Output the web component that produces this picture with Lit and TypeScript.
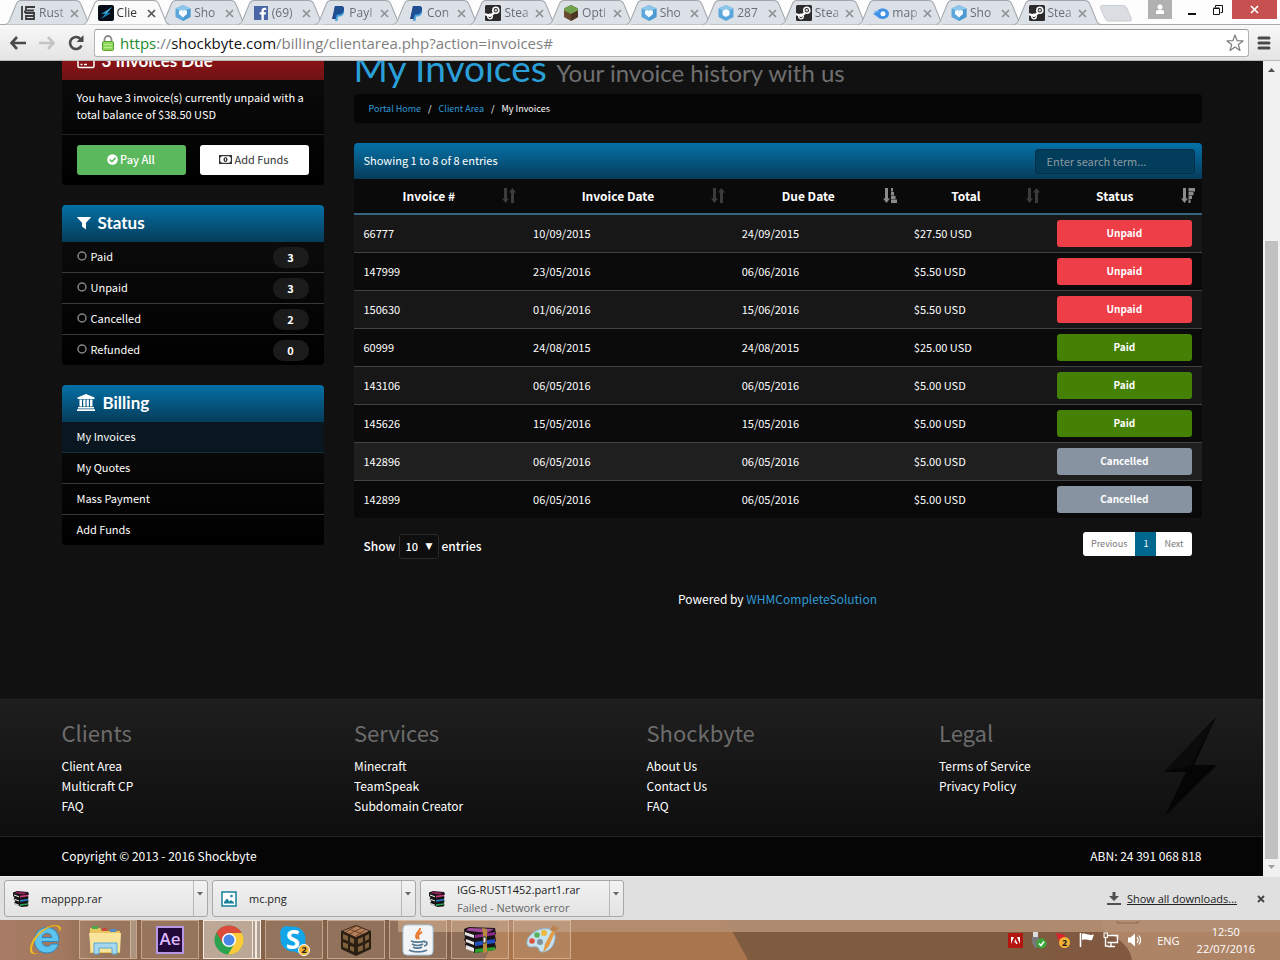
import { LitElement, html, css, svg, TemplateResult } from "lit";
import { customElement } from "lit/decorators.js";
import { classMap } from "lit/directives/class-map.js";

type Art = TemplateResult;

const art: Record<string, Art> = {
  rust: svg`<g fill="none" stroke="#3c3c3c" stroke-width="1.8"><path d="M2 1v14M15 2H6v3.500h8M6 2v0M5 8h9v6H6v-3h8M5 5.500V8M15 8h-9"/></g>`,
  shock: svg`<rect width="16" height="16" rx="2" fill="#060d16"/><path d="M14 2 3 9h4l-4 5 10-6H9z" fill="#1b84b8"/><path d="M14 2 6 8h3z" fill="#4ab4e0"/>`,
  cube: svg`<path d="M8 0l7.500 3.500v8.500L8 16 .5 12V3.500z" fill="#5aa7dc"/><path d="M8 0l7.500 3.500L8 7 .5 3.500z" fill="#8cc6ea"/><path d="M8 7v9l7.500-4V3.500z" fill="#3f8fc8" opacity=".6"/><path d="M4 6l2.500-1 1.500 1 1.500-1L12 6v3l-4 3.500L4 9z" fill="#f4faff"/>`,
  hex: svg`<path d="M8 0l7.500 3.500v8.500L8 16 .5 12V3.500z" fill="#5aa7dc"/><path d="M8 0l7.500 3.500L8 7 .5 3.500z" fill="#8cc6ea"/><path d="M8 4l3.500 2v4L8 12 4.500 10V6z" fill="#f4faff"/>`,
  fb: svg`<rect x="1" y="1" width="14" height="14" fill="#4b66a5"/><path d="M8.500 15V9.500H6.700V7.300h1.800V5.700c0-2 1.200-3 3-3h1.700v2.200H12c-.9 0-1.200.4-1.200 1.200v1.200H13l-.3 2.200h-1.900V15z" fill="#fff"/>`,
  paypal: svg`<path d="M5 1h5.500c3 0 4 1.800 3.300 4.500-.7 2.700-2.600 4-5.300 4H6.700L5.800 14H2z" fill="#253b80"/><path d="M6.500 4.500h5c2.500 0 3 1.500 2.500 3.500-.6 2.300-2.200 3.500-4.500 3.500H8.200L7.500 16H5z" fill="#1f8fd4" opacity=".75"/><path d="M5 1h5.500c3 0 4 1.800 3.300 4.500-.7 2.700-2.600 4-5.300 4H6.700L6 12.500H3z" fill="#1f4f93"/>`,
  steam: svg`<rect width="16" height="16" rx="1.500" fill="#2b2b2d"/><circle cx="10.800" cy="5.200" r="3" fill="none" stroke="#fff" stroke-width="1.600"/><circle cx="10.800" cy="5.200" r="1.200" fill="#ddd"/><path d="M0 9l5 2 4-3" fill="none" stroke="#fff" stroke-width="2.200"/><circle cx="5" cy="11.500" r="2.300" fill="none" stroke="#fff" stroke-width="1.300"/>`,
  grass: svg`<path d="M8 0l7 3.500v8.500L8 16 1 12V3.500z" fill="#6b4a31"/><path d="M8 0l7 3.500v2L8 9 1 5.500v-2z" fill="#6fa24a"/><path d="M8 9v7l7-4V5.500z" fill="#4d3524"/>`,
  media: svg`<path d="M0 9c3-1 4-5 9-5.500 4-.2 7 2 7 5s-2.500 5.500-6.500 5.500C5 14 5 11 0 9z" fill="#3f92e6"/><circle cx="10" cy="8.700" r="2.500" fill="#fff"/><path d="M1 6.500h5" stroke="#7db7f0" stroke-width="1.200"/>`,
  rar: svg`<path d="M0 1.500L4 0l11 1 1 2-1 1.500.500 2-.5 1.500.5 2-.5 2 .5 2-1 1.500-6 .5-7-3V11l1-1-2-2 1-1.500-2-2z" fill="#151515"/><path d="M4 .8l10 .9-3 1.800L1.500 2.200z" fill="#8f2058"/><path d="M7 4.700l8-1v1.500l-8 1.300z" fill="#d23a7a"/><path d="M7 9l8-1v1.500L7 10.800z" fill="#2d7fd0"/><path d="M7 13.300l8-1v1.500l-8 1.300z" fill="#2aa05a"/><path d="M1 3.500l5 1.700v1L1 4.500zM1.500 7.700l4.500 1.700v1L1.500 8.700zM1.500 12l4.500 1.700v1L1.500 13z" fill="#f2f2f2"/>`,
  image: svg`<rect x="1" y="1" width="14" height="14" fill="#fff" stroke="#15809c" stroke-width="1.500"/><path d="M3 12.500V11l3-3.500 2.500 3L10 9l3 2.500v1z" fill="#15809c"/><circle cx="10.500" cy="5" r="1.300" fill="#15809c"/>`,
  sort: svg`<path d="M5 0v10.500H7L3.500 15 0 10.500h2V0zM12 15V4.500h2L10.500 0 7 4.500h2V15z" fill="#3c3c3c"/>`,
  sortAsc: svg`<path d="M5 0v10.500H7L3.500 15 0 10.500h2V0z" fill="#8b8b8b"/><path d="M8 0h2v3.400H8zM8 4h3v3.200H8zM8 7.800h4.500V11H8zM8 11.600h6V15H8z" fill="#8b8b8b"/>`,
  sortDesc: svg`<path d="M5 0v10.500H7L3.500 15 0 10.500h2V0z" fill="#8b8b8b"/><path d="M7.500 0H14v3.400H7.500zM7.500 4h5v3.200h-5zM7.500 7.800H11V11H7.500zM7.500 11.600h2V15h-2z" fill="#8b8b8b"/>`,
};

const icon = (name: string, size = 16) =>
  html`<svg width=${size} height=${size} viewBox="0 0 16 16" aria-hidden="true">${art[name]}</svg>`;

const tabs: [string, string][] = [
  ["rust", "Rust"], ["shock", "Clie"], ["cube", "Sho"], ["fb", "(69)"], ["paypal", "PayI"],
  ["paypal", "Con"], ["steam", "Stea"], ["grass", "Opti"], ["cube", "Sho"], ["hex", "287"],
  ["steam", "Stea"], ["media", "map"], ["cube", "Sho"], ["steam", "Stea"],
];

const invoices: [string, string, string, string, string][] = [
  ["66777", "10/09/2015", "24/09/2015", "$27.50 USD", "Unpaid"],
  ["147999", "23/05/2016", "06/06/2016", "$5.50 USD", "Unpaid"],
  ["150630", "01/06/2016", "15/06/2016", "$5.50 USD", "Unpaid"],
  ["60999", "24/08/2015", "24/08/2015", "$25.00 USD", "Paid"],
  ["143106", "06/05/2016", "06/05/2016", "$5.00 USD", "Paid"],
  ["145626", "15/05/2016", "15/05/2016", "$5.00 USD", "Paid"],
  ["142896", "06/05/2016", "06/05/2016", "$5.00 USD", "Cancelled"],
  ["142899", "06/05/2016", "06/05/2016", "$5.00 USD", "Cancelled"],
];

@customElement("browser-chrome")
export class BrowserChrome extends LitElement {
  static styles = css`
    :host { display: block; font-family: "Open Sans", "Noto Sans", sans-serif; }
    button { border: 0; padding: 0; background: none; display: grid; place-items: center; font: inherit; }
    svg { display: block; flex: none; }
    .strip { display: flex; height: 24px; padding-left: 5px; background: #fdfdfd; }
    .tabs { display: flex; flex: 0 1 1086px; min-width: 0; }
    .tab { flex: 1 1 0; min-width: 0; position: relative; display: flex; align-items: center; height: 24px; padding: 2px 0 0 15px; box-sizing: border-box; font-size: 12px; line-height: 16px; color: #6a6e74; text-decoration: none; }
    .shape { position: absolute; top: 0; left: 0; width: calc(100% + 10px); height: 25px; }
    .shape path { fill: #dce0e7; stroke: #a3a7ac; }
    .active { z-index: 2; color: #333; }
    .active .shape path { fill: #fafafa; }
    .tab .fav { position: relative; display: flex; }
    .tab .name { position: relative; flex: 1; white-space: nowrap; margin-left: 3px; -webkit-mask-image: linear-gradient(90deg, #000 65%, transparent 105%); mask-image: linear-gradient(90deg, #000 65%, transparent 105%); }
    .tab .x { position: relative; flex: none; width: 9px; margin: 0 4px 0 2px; }
    .newtab { margin: 5px 0 0 8px; width: 34px; height: 17px; }
    .window { display: flex; margin-left: auto; height: 19px; padding-right: 3px; }
    .user { width: 24px; background: #b1b1b1; margin-right: 7px; }
    .win { width: 26px; }
    .close { width: 45px; background: #c75050; margin-left: 1px; }
    .toolbar { height: 35px; border-top: 1px solid #a9a9a9; border-bottom: 1px solid #b9b9b9; display: flex; align-items: center; background: linear-gradient(#f8f8f8, #e4e4e4); padding: 0 9px 0 8px; }
    .nav { display: flex; width: 86px; gap: 9px; }
    .nav button { width: 20px; height: 20px; }
    .omni { flex: 1; min-width: 0; height: 26px; border: 1px solid #b2b2b2; border-top-color: #9a9a9a; border-radius: 3px; background: #fff; display: flex; align-items: center; padding: 0 4px 0 6px; }
    .url { flex: 1; min-width: 0; overflow: hidden; white-space: nowrap; margin-left: 5px; font-size: 15px; line-height: 22px; color: #808080; outline: 0; }
    .secure { color: #188c2b; }
    .host { color: #111; }
    .menu { width: 14px; margin-left: 8px; }
  `;

  render() {
    const cross = (c: string) => svg`<path d="M1 1l7 7M8 1L1 8" stroke=${c} stroke-width="1.700" fill="none"/>`;
    return html`
      <div class="strip">
        <nav class="tabs" aria-label="Tabs">
          ${tabs.map(([fav, name], i) => html`
            <a href="#" class=${classMap({ tab: true, active: i === 1 })}>
              <svg class="shape" viewBox="0 0 87 25" preserveAspectRatio="none"><path d="M-1 24.500C4 24.500 4 21 5.500 18L11 4.500C12 1.500 13 .5 16 .5H70C73 .5 74.500 1.500 75.500 4.500L81 18C82.500 22 83 24.500 87 24.500"/></svg>
              <span class="fav">${icon(fav)}</span><span class="name">${name}</span>
              <svg class="x" width="9" height="9" viewBox="0 0 9 9">${cross(i === 1 ? "#555" : "#8f9297")}</svg>
            </a>`)}
        </nav>
        <button class="newtab" aria-label="New tab"><svg width="34" height="17" viewBox="0 0 34 17"><path d="M3.500.5H24c2 0 3 .8 3.800 2.500l4.500 10.500c.6 1.800 0 2.500-1.600 2.500H10c-2 0-3-.8-3.800-2.500L1.600 3C1 1.300 1.700.5 3.500.5z" fill="#dadde1" stroke="#c9ccd0"/></svg></button>
        <div class="window">
          <button class="user" aria-label="Profile"><svg width="10" height="11" viewBox="0 0 10 11"><circle cx="5" cy="3" r="2.500" fill="#fff"/><path d="M1 10V8c0-1.500 1-2 2.500-2h3C8 6 9 6.500 9 8v2z" fill="#fff"/></svg></button>
          <button class="win" aria-label="Minimize"><svg width="10" height="12"><path d="M1 10h8" stroke="#111" stroke-width="2"/></svg></button>
          <button class="win" aria-label="Restore"><svg width="10" height="10"><path d="M.5 3.500h6v6h-6zM.5 3h6M2.500 2.500v-2h7v7h-2" fill="none" stroke="#111"/></svg></button>
          <button class="close" aria-label="Close"><svg width="9" height="9">${cross("#fff")}</svg></button>
        </div>
      </div>
      <div class="toolbar">
        <div class="nav">
          <button aria-label="Back"><svg width="18" height="16" viewBox="0 0 18 16"><path d="M8 2L2.500 8 8 14M3 8h14" fill="none" stroke="#4a4a4a" stroke-width="2.600"/></svg></button>
          <button aria-label="Forward"><svg width="18" height="16" viewBox="0 0 18 16"><path d="M10 2l5.500 6L10 14M15 8H1" fill="none" stroke="#c4c4c4" stroke-width="2.600"/></svg></button>
          <button aria-label="Reload"><svg width="18" height="16" viewBox="0 0 18 16"><path d="M14.500 10.500A6 6 0 1 1 13.500 4" fill="none" stroke="#4a4a4a" stroke-width="2.600"/><path d="M16.500 0v7H9.500z" fill="#4a4a4a"/></svg></button>
        </div>
        <div class="omni">
          <svg width="14" height="16" viewBox="0 0 14 16"><path d="M3.500 8V4.500a3.500 3.500 0 0 1 7 0V8" fill="none" stroke="#8b8b8b" stroke-width="1.800"/><rect x="1.500" y="6.500" width="11" height="9" rx="1" fill="#8fd65a" stroke="#58a02f"/><path d="M3 9.500h8M3 12.500h8" stroke="#b3ec88"/></svg>
          <div class="url" role="textbox" aria-label="Address" contenteditable="true" spellcheck="false"><span class="secure">https</span>://<span class="host">shockbyte.com</span>/billing/clientarea.php?action=invoices#</div>
          <svg width="18" height="18" viewBox="0 0 18 18"><path d="M9 1l2.100 5.700 5.900.2-4.700 3.600 1.700 5.900L9 13l-5 3.400 1.700-5.900L1 6.900l5.900-.2z" fill="#fff" stroke="#7c7c7c" stroke-width="1.200" stroke-linejoin="round"/></svg>
        </div>
        <button class="menu" aria-label="Menu"><svg width="14" height="14"><path d="M2 2h10M2 7h10M2 12h10" stroke="#4a4a4a" stroke-width="3" stroke-linecap="round"/></svg></button>
      </div>`;
  }
}

@customElement("billing-page")
export class BillingPage extends LitElement {
  static styles = css`
    :host { display: flex; flex: 1; min-height: 0; color: #fff; font: 12px/17px "Noto Sans CJK SC", "Source Sans Pro", sans-serif; }
    a { color: inherit; text-decoration: none; }
    svg { display: block; flex: none; }
    ul { list-style: none; margin: 0; padding: 0; }
    .page { flex: 1; min-width: 0; overflow: hidden; background: #111; display: flex; flex-direction: column; }
    .wrap { width: 100%; max-width: 1170px; margin: 0 auto; padding: 0 15px; box-sizing: border-box; }
    .body { display: grid; grid-template-columns: minmax(0, 262fr) minmax(0, 848fr); gap: 30px; flex: 1; min-height: 0; }
    .side { display: flex; flex-direction: column; gap: 20px; margin-top: -18px; }
    .panel { border-radius: 4px; overflow: hidden; background: linear-gradient(#0e0e0e, #000); flex: none; }
    .phead { display: flex; align-items: center; gap: 7px; height: 37px; padding: 0 15px 2px; box-sizing: border-box; background: linear-gradient(#0570a5, #063c5a); }
    .phead h2 { margin: 0; font: 700 17px/21px Lato, sans-serif; }
    .wide { gap: 8px; }
    .due { background: linear-gradient(#a31418, #6e1214); }
    .note { margin: 0; padding: 9px 15px 11px; border-bottom: 1px solid #222; font-size: 11px; }
    .buttons { display: grid; grid-template-columns: 1fr 1fr; gap: 14px; padding: 10px 15px; }
    .btn { height: 30px; border: 0; border-radius: 3px; display: flex; align-items: center; justify-content: center; gap: 2px; background: #fff; color: #333; font: inherit; font-size: 11px; padding: 0 6px 2px; }
    .pay { background: #5cb85c; color: #fff; font-weight: 500; }
    .row { display: flex; align-items: center; height: 30px; padding: 0 15px 2px; box-sizing: border-box; border-bottom: 1px solid #383838; font-size: 11px; height: 31px; }
    .last .row { border-bottom: 0; height: 30px; }
    .row svg { margin-right: 4px; }
    .current { background: #0a1720; border-color: #17303e; }
    .badge { margin: 2px 0 0 auto; width: 36px; height: 21px; border-radius: 10px; background: #1b1b1b; font-weight: 700; line-height: 20px; text-align: center; }
    .main { min-width: 0; }
    h1 { margin: -13px 0 6px; font: 400 37px/40px Lato, sans-serif; height: 40px; color: #2a9fd8; white-space: nowrap; }
    h1 small { font-size: 24px; line-height: 24px; color: #6f6f6f; }
    .crumbs { display: flex; gap: 7px; height: 29px; align-items: center; padding: 0 15px; background: #060606; border-radius: 4px; font-size: 9px; margin-bottom: 20px; }
    .crumbs a, .powered a { color: #2f9ad6; }
    .info { display: flex; align-items: center; justify-content: space-between; height: 36px; padding: 0 7px 0 10px; background: linear-gradient(#0572a8, #063c5a); font-size: 11px; }
    .info span { padding-bottom: 2px; }
    .info input { width: 160px; height: 25px; box-sizing: border-box; padding: 0 11px; border: 1px solid #04304a; border-radius: 3px; background: #033d5c; color: #fff; font: inherit; }
    .info input::placeholder { color: #8a999f; opacity: 1; }
    table { width: 100%; border-collapse: separate; border-spacing: 0; table-layout: fixed; font-size: 11px; }
    .c1 { width: 20%; } .c2 { width: 24.6%; } .c3 { width: 20.300%; } .c4 { width: 16.900%; }
    th { height: 34px; padding: 0 7px 2px 10px; box-sizing: border-box; height: 36px; border-bottom: 2px solid #34657f; background: #0a0a0a; font-weight: 700; font-size: 12px; }
    .th { display: flex; align-items: center; }
    .th span { flex: 1; padding-right: 8px; text-align: center; }
    td { height: 37px; padding: 0 10px; border-bottom: 1px solid #424242; background: #0b0b0b; }
    tr:nth-child(odd) td { background: #171717; }
    tr.hover td { background: #1f1f1f; }
    tr:last-child td { border-bottom: 0; background: #090909; }
    .tag { display: block; height: 27px; border-radius: 3px; font-size: 10px; font-weight: 700; line-height: 26px; text-align: center; margin-bottom: 1px; }
    .unpaid { background: #ee3e48; } .paid { background: #458104; } .cancelled { background: #8793a0; }
    .under { display: flex; justify-content: space-between; align-items: flex-start; padding: 14px 10px 0; }
    .show { display: flex; align-items: center; gap: 3px; height: 26px; font-weight: 500; font-size: 12px; }
    .pick { display: grid; align-items: center; width: 40px; margin-top: 2px; }
    .pick select, .pick span { grid-area: 1 / 1; }
    .pick select { appearance: none; height: 25px; border: 1px solid #2a2a2a; border-radius: 3px; background: #0e0e0e; color: #fff; font: inherit; font-size: 11px; padding: 0 6px; }
    .pick span { justify-self: end; margin-right: 6px; pointer-events: none; font: 9px/12px "DejaVu Sans", sans-serif; }
    .pager { display: flex; height: 24px; border-radius: 3px; overflow: hidden; background: #fff; color: #777; font-size: 9px; line-height: 24px; }
    .pager a { padding: 0 8px; }
    .pager .on { background: #00688f; color: #fff; }
    .powered { margin: 31px 0 0; text-align: center; font-size: 12px; line-height: 20px; }
    .foot { flex: none; background: linear-gradient(#1e1e1e, #0e0e0e); border-top: 1px solid #222; border-bottom: 1px solid #222; font-size: 12px; line-height: 20px; }
    .cols { display: grid; grid-template-columns: repeat(4, minmax(0, 1fr)); column-gap: 30px; height: 136px; position: relative; }
    .cols h3 { margin: 18px 0 10px; font-weight: 400; font-size: 22px; line-height: 28px; color: #6c6c6c; }
    .bolt { position: absolute; right: -15px; top: 17px; }
    .legal { flex: none; background: #050505; font-size: 12px; }
    .legal .wrap { display: flex; justify-content: space-between; height: 39px; padding-bottom: 2px; align-items: center; }
    .scroll { width: 17px; flex: none; background: #f1f1f1; display: flex; flex-direction: column; align-items: center; }
    .scroll svg { height: 17px; }
    .gap { flex: 163; }
    .thumb { flex: 618; width: 13px; background: #c1c1c1; }
  `;

  private head(label: string, sort: string) {
    return html`<th scope="col"><div class="th"><span>${label}</span><svg width="14" height="15" viewBox="0 0 14 15">${art[sort]}</svg></div></th>`;
  }

  private links(title: string, items: string[]) {
    return html`<div><h3>${title}</h3><ul>${items.map((t) => html`<li><a href="#">${t}</a></li>`)}</ul></div>`;
  }

  render() {
    return html`
      <div class="page">
        <div class="wrap body">
          <aside class="side">
            <section class="panel">
              <div class="phead due"><svg width="18" height="16" viewBox="0 0 18 16"><rect x="1" y="1.500" width="16" height="13" rx="1.500" fill="none" stroke="#fff" stroke-width="1.500"/><path d="M1 5h16M3.500 11.500h2M7 11.500h3" stroke="#fff" stroke-width="1.500"/></svg><h2>3 Invoices Due</h2></div>
              <p class="note">You have 3 invoice(s) currently unpaid with a total balance of $38.50 USD</p>
              <div class="buttons">
                <button class="btn pay"><svg width="11" height="11" viewBox="0 0 11 11"><circle cx="5.500" cy="5.500" r="5.300" fill="#fff"/><path d="M2.700 5.500l2.200 2.200 3.600-3.800" fill="none" stroke="#5cb85c" stroke-width="1.600"/></svg>Pay All</button>
                <button class="btn"><svg width="13" height="9" viewBox="0 0 13 9"><rect x=".6" y=".6" width="11.800" height="7.800" fill="none" stroke="#333" stroke-width="1.200"/><ellipse cx="6.500" cy="4.500" rx="2" ry="2.600" fill="#333"/><path d="M6.500 3.200v2.600" stroke="#fff"/><path d="M1 1h1.500L1 2.500zM12 1v1.500L10.500 1zM1 8V6.500L2.500 8zM12 8h-1.500L12 6.500z" fill="#333" stroke="#333" stroke-width=".6"/></svg>Add Funds</button>
              </div>
            </section>
            <section class="panel">
              <div class="phead"><svg width="14" height="14" viewBox="0 0 14 14"><path d="M.5 1h13c.4 0 .5.500.2.800L9 6.800V13.500L5 10.500V6.800L.3 1.800C0 1.500.1 1 .5 1z" fill="#fff"/></svg><h2>Status</h2></div>
              <ul>
                ${[["Paid", 3], ["Unpaid", 3], ["Cancelled", 2], ["Refunded", 0]].map(([n, c], i) => html`
                  <li class=${i === 3 ? "last" : ""}><a class="row" href="#"><svg width="10" height="10"><circle cx="5" cy="5" r="4" fill="none" stroke="#858585" stroke-width="1.500"/></svg>${n}<span class="badge">${c}</span></a></li>`)}
              </ul>
            </section>
            <section class="panel">
              <div class="phead wide"><svg width="18" height="17" viewBox="0 0 18 17"><path d="M9 0l8.500 3.500V5H.5V3.500zM1 14.500h16V13H1zM0 17h18v-1.700H0zM2.500 5.500H5v7H2.500zM6.200 5.500h2.300v7H6.200zM9.600 5.500h2.300v7H9.600zM13 5.500h2.500v7H13z" fill="#fff"/></svg><h2>Billing</h2></div>
              <ul>
                ${["My Invoices", "My Quotes", "Mass Payment", "Add Funds"].map((n, i) => html`
                  <li class=${i === 3 ? "last" : ""}><a href="#" class=${classMap({ row: true, current: i === 0 })}>${n}</a></li>`)}
              </ul>
            </section>
          </aside>
          <main class="main">
            <h1>My Invoices <small>Your invoice history with us</small></h1>
            <nav class="crumbs"><a href="#">Portal Home</a><span>/</span><a href="#">Client Area</a><span>/</span><span>My Invoices</span></nav>
            <section class="panel">
              <div class="info"><span>Showing 1 to 8 of 8 entries</span><input type="search" aria-label="Search invoices" placeholder="Enter search term..." /></div>
              <table>
                <colgroup><col class="c1" /><col class="c2" /><col class="c3" /><col class="c4" /><col /></colgroup>
                <thead><tr>${this.head("Invoice #", "sort")}${this.head("Invoice Date", "sort")}${this.head("Due Date", "sortAsc")}${this.head("Total", "sort")}${this.head("Status", "sortDesc")}</tr></thead>
                <tbody>
                  ${invoices.map(([id, made, due, total, status], i) => html`
                    <tr class=${i === 6 ? "hover" : ""}><td>${id}</td><td>${made}</td><td>${due}</td><td>${total}</td><td><span class="tag ${status.toLowerCase()}">${status}</span></td></tr>`)}
                </tbody>
              </table>
            </section>
            <div class="under">
              <label class="show">Show <span class="pick"><select><option>10</option><option>25</option><option>50</option></select><span>▼</span></span> entries</label>
              <nav class="pager"><a href="#">Previous</a><a href="#" class="on">1</a><a href="#">Next</a></nav>
            </div>
            <p class="powered">Powered by <a href="#">WHMCompleteSolution</a></p>
          </main>
        </div>
        <footer class="foot">
          <div class="wrap">
            <div class="cols">
              ${this.links("Clients", ["Client Area", "Multicraft CP", "FAQ"])}
              ${this.links("Services", ["Minecraft", "TeamSpeak", "Subdomain Creator"])}
              ${this.links("Shockbyte", ["About Us", "Contact Us", "FAQ"])}
              ${this.links("Legal", ["Terms of Service", "Privacy Policy"])}
              <svg class="bolt" width="54" height="100" viewBox="0 0 54 100"><path d="M53 0L1 55h22L2 99l52-51H31z" fill="#050505"/><path d="M53 0L1 55l27-7z" fill="#0b0b0b"/></svg>
            </div>
          </div>
        </footer>
        <div class="legal"><div class="wrap"><span>Copyright © 2013 - 2016 Shockbyte</span><span>ABN: 24 391 068 818</span></div></div>
      </div>
      <div class="scroll" aria-hidden="true">
        <svg width="9" height="17"><path d="M1 11l3.500-4L8 11z" fill="#505050"/></svg>
        <div class="gap"></div><div class="thumb"></div>
        <svg width="9" height="17"><path d="M1 6l3.500 4L8 6z" fill="#a0a0a0"/></svg>
      </div>`;
  }
}

@customElement("download-shelf")
export class DownloadShelf extends LitElement {
  static styles = css`
    :host { display: flex; align-items: center; gap: 4px; height: 43px; padding: 0 4px; border-top: 1px solid #ededed; background: #e0e0e0; color: #222; font: 11px/18px "Open Sans", sans-serif; }
    svg { display: block; flex: none; }
    button { border: 0; padding: 0; background: none; font: inherit; }
    .item { flex: 0 1 204px; min-width: 0; box-sizing: border-box; height: 37px; display: flex; border: 1px solid #a9a9a9; border-radius: 3px; background: linear-gradient(#f2f2f2, #e3e3e3); }
    .file { flex: 1; min-width: 0; display: flex; align-items: center; gap: 12px; padding: 0 8px; white-space: nowrap; text-align: left; color: inherit; }
    .more { width: 14px; border-left: 1px solid #b9b9b9; display: flex; justify-content: center; padding-top: 11px; }
    .sub { display: block; color: #666; }
    .all { margin-left: auto; display: flex; align-items: center; gap: 6px; color: #222; font-size: 11px; }
    .dismiss { margin: 0 11px 0 16px; }
  `;

  private item(name: string, pic: string, sub = "") {
    return html`<div class="item"><button class="file">${icon(pic)}<span>${name}${sub ? html`<span class="sub">${sub}</span>` : ""}</span></button>
      <button class="more" aria-label="Options for ${name}"><svg width="7" height="4"><path d="M0 0h6L3 3.500z" fill="#666"/></svg></button></div>`;
  }

  render() {
    return html`${this.item("mapppp.rar", "rar")}${this.item("mc.png", "image")}${this.item("IGG-RUST1452.part1.rar", "rar", "Failed - Network error")}
      <a class="all" href="#"><svg width="14" height="13"><path d="M5.500 0h3v4H12L7 9 2 4h3.500zM0 11h14v2H0z" fill="#505050"/></svg>Show all downloads...</a>
      <button class="dismiss" aria-label="Close downloads"><svg width="8" height="8"><path d="M1 1l6 6M7 1L1 7" stroke="#444" stroke-width="1.800"/></svg></button>`;
  }
}

@customElement("task-bar")
export class TaskBar extends LitElement {
  static styles = css`
    :host { display: flex; height: 40px; overflow: hidden; position: relative; color: #fff; font: 11px/17px "Open Sans", sans-serif; background: #a77e67; }
    svg { display: block; flex: none; }
    button { padding: 0; border: 0; background: none; display: grid; place-items: center; color: inherit; font: inherit; }
    .scene { position: absolute; inset: 0; width: 100%; height: 100%; }
    .apps { position: relative; display: flex; gap: 4px; padding-left: 17px; }
    .app { width: 58px; height: 39px; box-sizing: border-box; border: 1px solid rgba(235, 205, 180, .55); background: rgba(255, 240, 225, .12); }
    .plain { border: 0; background: none; }
    .stack { box-shadow: inset -5px 0 0 rgba(80, 55, 40, .25), inset -6px 0 0 rgba(240, 220, 200, .6); padding-right: 6px; }
    .lit { background: rgba(255, 250, 245, .45); border-color: #f4e9df; box-shadow: inset -3px 0 0 rgba(110, 85, 70, .5), inset -5px 0 0 #f4e9df, inset -7px 0 0 rgba(110, 85, 70, .5), inset -8px 0 0 #f4e9df; padding-right: 7px; }
    .tray { position: relative; margin-left: auto; display: flex; align-items: center; gap: 8px; padding-right: 25px; }
    .lang { margin: 0 9px 0 6px; }
    .clock { text-align: center; }
    .clock span { display: block; }
    .ae { font: 600 17px/20px "Open Sans", sans-serif; fill: #dcb8ff; }
    .sk { font: 700 26px/28px "Open Sans", sans-serif; fill: #fff; }
    .num { font: 700 9px/10px "Open Sans", sans-serif; fill: #222; }
  `;

  render() {
    return html`
      <svg class="scene" viewBox="0 0 1280 40" preserveAspectRatio="none" aria-hidden="true">
        <defs><linearGradient id="w"><stop offset="0" stop-color="#a77b65"/><stop offset=".12" stop-color="#a2795f"/><stop offset=".2" stop-color="#8a664d"/><stop offset="1" stop-color="#7f5d47"/></linearGradient></defs>
        <rect width="520" height="40" fill="url(#w)"/>
        <path d="M500 0H726L748 40H485z" fill="#a9754c"/><path d="M726 0h391q20 18 16 40H748z" fill="#7f5b40"/>
        <path d="M1050 0h55q27 15 27 40h-82z" fill="#825842" opacity=".7"/><path d="M1105 12q24 10 27 28h148V0h-180z" fill="#ae8467"/>
        <rect x="398" width="882" height="12" fill="#b48f73" opacity=".9"/>
        <path d="M1117 1v2h21V1" fill="none" stroke="#8b6c57"/>
      </svg>
      <div class="apps">
        <button class="app plain" aria-label="Internet Explorer"><svg width="32" height="32" viewBox="0 0 32 32"><path d="M17 3.500c7.500 0 12 5.500 12 14H12c.3 3 2.300 4.800 5.200 4.800 2 0 3.300-.8 4.200-2.300h7C27 25.500 22.500 29 17 29 9.500 29 4.500 23.500 4.500 16.500S9.500 3.500 17 3.500zM12.200 13.500h9.700c-.4-2.700-2.200-4.200-4.800-4.200s-4.400 1.500-4.900 4.200z" fill="#5cc4ee" stroke="#2f86bd"/><path d="M3 28.500C-.5 24 5 13 14 6.500S30 1 29.500 7c2-1 2-5-2-5.500C20-.5 7 8 2.500 17S-.5 31.500 7.500 29.500c-2 .3-3.500 0-4.500-1z" fill="#f7c426" stroke="#e0a412" stroke-width=".5"/></svg></button>
        <button class="app stack" aria-label="Explorer"><svg width="34" height="30" viewBox="0 0 34 30"><path d="M2 3h10l2 3h18v22H2z" fill="#e9c55e"/><path d="M4 1h6v3H4z" fill="#49a94b"/><path d="M14 3h5v3h-5z" fill="#c8493d"/><path d="M22 4h6v3h-6z" fill="#4f90c8"/><path d="M1 8h32l-1 19H3z" fill="#f8e49b"/><path d="M6 18h23v11h-5v-6H11v6H6z" fill="#a5d8ef" stroke="#5ba7cf"/></svg></button>
        <button class="app" aria-label="After Effects"><svg width="28" height="28" viewBox="0 0 28 28"><rect x="1" y="1" width="26" height="26" fill="#220a38" stroke="#b798e8" stroke-width="2"/><text class="ae" x="14" y="19" text-anchor="middle">Ae</text></svg></button>
        <button class="app lit" aria-label="Chrome"><svg width="30" height="30" viewBox="0 0 30 30"><circle cx="15" cy="15" r="14.500" fill="#2da24e"/><path d="M15 15L2.400 7.700A14.500 14.500 0 0 1 27.700 8H15z" fill="#dd4b3c"/><path d="M2.400 7.700L9 18.500 15 15l4-7z" fill="#dd4b3c"/><path d="M15 8h12.700A14.500 14.500 0 0 1 14 29.500l7-11.500z" fill="#fbcb3b"/><circle cx="15" cy="15" r="7" fill="#fff"/><circle cx="15" cy="15" r="5.500" fill="#4886e8"/></svg></button>
        <button class="app" aria-label="Skype"><svg width="32" height="32" viewBox="0 0 32 32"><circle cx="15" cy="15" r="12.500" fill="#12a5e8"/><circle cx="9" cy="9" r="7" fill="#12a5e8"/><circle cx="21" cy="22" r="7" fill="#12a5e8"/><text class="sk" x="15" y="25" text-anchor="middle">S</text><circle cx="26" cy="26" r="5.500" fill="#f5b334" stroke="#fff"/><text class="num" x="26" y="29" text-anchor="middle">2</text></svg></button>
        <button class="app" aria-label="Minecraft"><svg width="32" height="32" viewBox="0 0 32 32"><path d="M16 1l15 6v18l-15 7L1 25V7z" fill="#2b1f14"/><path d="M16 2l13 5-13 6L3 7z" fill="#b5805a"/><path d="M9 5l13 5M16 2l-10 6M22 4l-13 6M25 6l-9 6" stroke="#6b4428"/><path d="M3 10l5 2v5l-5-2zM10 13l4 2v5l-4-2zM3 18l5 2v5l-5-2zM10 22l4 1v5l-4-2zM18 15l5-2v5l-5 2zM25 12l4-2v5l-4 2zM18 23l5-2v5l-5 2zM25 20l4-2v5l-4 2z" fill="#80603a"/></svg></button>
        <button class="app" aria-label="Java"><svg width="32" height="32" viewBox="0 0 32 32"><rect x="1" y="1" width="30" height="30" rx="4" fill="#f3f4f5" stroke="#a9cbe2"/><path d="M18 4c1 4-7 5-3 11M20 8c-4 2-5 4-3 7" fill="none" stroke="#e8762c" stroke-width="2"/><path d="M9 17c3 1.500 10 1.500 14 0M10 20c3 2 8 2 11 0M11 23c2 1.500 7 1.500 9 0M7 26c4 2.500 14 2.500 18 0M22 18c4-1 4 3 0 4" fill="none" stroke="#557a96" stroke-width="1.600"/></svg></button>
        <button class="app" aria-label="WinRAR"><svg width="34" height="28" viewBox="0 0 34 28"><path d="M1 3l5-2 26 1 1 6-1 1 1 6-1 1 1 6-2 2-19 3-9-5-1-4 1-1-2-4 1-1z" fill="#1a1418"/><path d="M6 2l25 1-7 4L3 4.500z" fill="#a04a9c"/><path d="M12 9l20-3v3l-20 3z" fill="#8d2d88"/><path d="M12 16l20-3v4l-20 3z" fill="#2050c0"/><path d="M12 23l20-2v3l-20 3z" fill="#2aa02a"/><path d="M2 6l9 3v3L2 9zM3 13l8 3v3l-8-3zM3 19l8 3v4l-8-3z" fill="#e5e5e5"/><path d="M19 2l5 1v23l-4 1V8z" fill="#b68a3c"/><path d="M20 11h3v6h-3z" fill="#eee" stroke="#333"/></svg></button>
        <button class="app" aria-label="Paint"><svg width="34" height="32" viewBox="0 0 34 32"><path d="M17 5c9-2 14 3 13 10s-6 13-13 13c-4 0-2-4-5-5s-6 1-9-1C-1 17 6 7 17 5z" fill="#c5e2f1" stroke="#8fb6ce"/><circle cx="7" cy="17" r="2.800" fill="#e0533f"/><circle cx="12" cy="11" r="2.800" fill="#57b35b"/><circle cx="19" cy="9" r="3" fill="#f0b83c"/><circle cx="15" cy="18" r="3" fill="#80949f"/><path d="M18 29l2-9 8-15 3 1-7 16z" fill="#e39b46"/><path d="M25 6l3-5 6 3-4 4z" fill="#b98652"/></svg></button>
      </div>
      <div class="tray">
        <svg width="15" height="15" viewBox="0 0 15 15"><rect width="15" height="15" fill="#b3150f"/><path d="M3 11V4h3zM12 11V4H9zM7.500 6l2.200 5H8.200l-.8-1.500H6.200z" fill="#fff"/></svg>
        <svg width="16" height="17" viewBox="0 0 16 17"><path d="M2 0h5v5H2z" fill="#ddd"/><path d="M1 5h7v6l-2 5H4l-3-5z" fill="#777"/><circle cx="10.500" cy="11.500" r="5" fill="#38a838"/><path d="M8 11.500l2 2 3-4" fill="none" stroke="#fff" stroke-width="1.500"/></svg>
        <svg width="16" height="17" viewBox="0 0 16 17"><path d="M1 1l5 1 4 1v7H4z" fill="#d7262c"/><circle cx="9.500" cy="10.500" r="5.500" fill="#f5b334"/><text class="num" x="9.500" y="14" text-anchor="middle">2</text></svg>
        <svg width="16" height="16" viewBox="0 0 16 16"><path d="M1.500 1v14" stroke="#fff" stroke-width="1.600"/><path d="M3 2c4-1.500 5 2 12 .5L13 8c-4 1-5-1.500-10 0z" fill="#fff"/></svg>
        <svg width="16" height="16" viewBox="0 0 16 16"><path d="M5 3.500h9.500v7H4.500M8 10.500V14M5 14.500h7M2.500 6v8H5" fill="none" stroke="#fff" stroke-width="1.400"/><rect x="1" y="1" width="3.500" height="4.500" fill="#98735a" stroke="#fff"/></svg>
        <svg width="16" height="16" viewBox="0 0 16 16"><path d="M1 5.500h2.500L8 1.500v13L3.500 10.500H1z" fill="#fff"/><path d="M10 5c1.500 2 1.500 4 0 6M12 3.500c2 3 2 6 0 9" fill="none" stroke="#fff" stroke-width="1.200"/></svg>
        <span class="lang">ENG</span>
        <div class="clock"><span>12:50</span><span>22/07/2016</span></div>
      </div>`;
  }
}

@customElement("app-root")
export class AppRoot extends LitElement {
  static styles = css`
    :host { display: flex; flex-direction: column; height: 100vh; overflow: hidden; background: #111; }
  `;

  render() {
    return html`<browser-chrome></browser-chrome><billing-page></billing-page><download-shelf></download-shelf><task-bar></task-bar>`;
  }
}
